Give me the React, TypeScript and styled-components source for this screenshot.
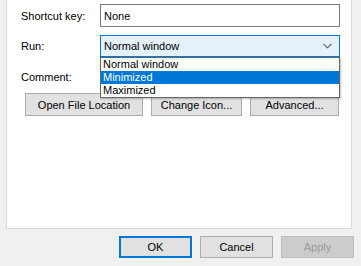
import * as React from 'react'
import styled, { createGlobalStyle } from 'styled-components'

const Global = createGlobalStyle`
  html, body {
    margin: 0;
    padding: 0;
    background: #f0f0f0;
  }
  body {
    font-family: 'Liberation Sans', Arial, sans-serif;
    font-size: 11px;
    color: #000;
  }
`

const Window = styled.div`
  width: 361px;
  height: 266px;
  overflow: hidden;
  background: #f0f0f0;
`

const Panel = styled.div`
  margin-left: 6px;
  width: 346px;
  height: 229px;
  background: #fff;
  border: 1px solid #d9d9d9;
  border-top: none;
  padding: 4px 0 0 14px;
  box-sizing: border-box;
`

const Form = styled.div`
  display: grid;
  grid-template-columns: 79px 240px;
  grid-auto-rows: auto;
  row-gap: 8px;
  align-items: center;
`

const Label = styled.div`
  white-space: nowrap;
`

const TextBox = styled.div`
  height: 23px;
  box-sizing: border-box;
  border: 1px solid #7a7a7a;
  background: #fff;
  padding: 0 3px;
  display: flex;
  align-items: center;
`

const ComboWrap = styled.div`
  position: relative;
`

const Combo = styled.div`
  height: 22px;
  box-sizing: border-box;
  border: 1px solid #0078d7;
  background: #e5f1fb;
  padding: 0 3px;
  display: flex;
  align-items: center;
  justify-content: space-between;
`

const Chevron = styled.svg`
  margin-right: 4px;
`

const List = styled.div`
  position: absolute;
  left: 0;
  top: 22px;
  width: 240px;
  box-sizing: border-box;
  border: 1px solid #646464;
  background: #fff;
  box-shadow: 1px 1px 2px rgba(0, 0, 0, 0.25);
  z-index: 2;
`

const Item = styled.div<{ $active?: boolean }>`
  height: 13px;
  line-height: 13px;
  padding: 0 2px;
  background: ${p => (p.$active ? '#0078d7' : '#fff')};
  color: ${p => (p.$active ? '#fff' : '#000')};
`

const ButtonRow = styled.div`
  display: flex;
  gap: 8px;
  margin: 5px 0 0 4px;
`

const Button = styled.div<{ $w: number; $h?: number; $primary?: boolean; $disabled?: boolean }>`
  width: ${p => p.$w}px;
  height: ${p => p.$h ?? 23}px;
  box-sizing: border-box;
  display: flex;
  align-items: center;
  justify-content: center;
  background: ${p => (p.$disabled ? '#cccccc' : '#e1e1e1')};
  color: ${p => (p.$disabled ? '#9b9b9b' : '#000')};
  border: ${p =>
    p.$primary ? '2px solid #0078d7' : p.$disabled ? '1px solid #bfbfbf' : '1px solid #adadad'};
`

const Footer = styled.div`
  display: flex;
  justify-content: flex-end;
  gap: 8px;
  padding: 7px 7px 0 0;
`

export default function App() {
  return (
    <Window>
      <Global />
      <Panel>
        <Form>
          <Label>Shortcut key:</Label>
          <TextBox>None</TextBox>
          <Label>Run:</Label>
          <ComboWrap>
            <Combo>
              <span>Normal window</span>
              <Chevron width="9" height="6" viewBox="0 0 9 6">
                <path d="M0.5 0.8 L4.5 4.8 L8.5 0.8" fill="none" stroke="#5a5a5a" strokeWidth="1.1" />
              </Chevron>
            </Combo>
            <List>
              <Item>Normal window</Item>
              <Item $active>Minimized</Item>
              <Item>Maximized</Item>
            </List>
          </ComboWrap>
          <Label>Comment:</Label>
          <TextBox />
        </Form>
        <ButtonRow>
          <Button $w={118}>Open File Location</Button>
          <Button $w={91}>Change Icon...</Button>
          <Button $w={89}>Advanced...</Button>
        </ButtonRow>
      </Panel>
      <Footer>
        <Button $w={73} $h={22} $primary>OK</Button>
        <Button $w={73} $h={22}>Cancel</Button>
        <Button $w={73} $h={22} $disabled>Apply</Button>
      </Footer>
    </Window>
  )
}
